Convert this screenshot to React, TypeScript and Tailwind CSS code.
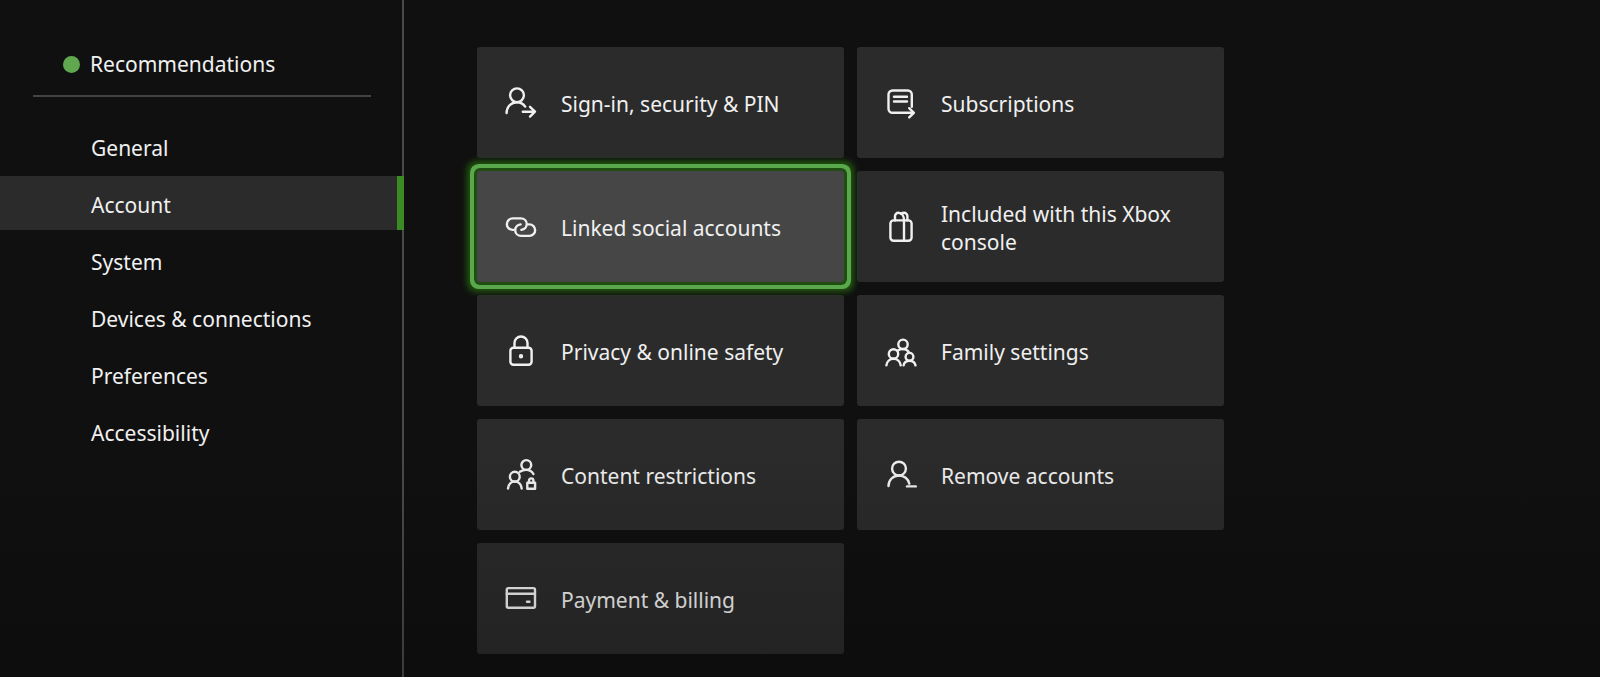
import type { ReactNode } from "react";
import clsx from "clsx";

const navItems = [
  "General",
  "Account",
  "System",
  "Devices & connections",
  "Preferences",
  "Accessibility",
];

const icons: Record<string, ReactNode> = {
  signIn: (
    <>
      <circle cx="12" cy="8.3" r="6.9" />
      <path d="M1.6 26c0-6.2 4.6-10.8 10.4-10.8 3.4 0 6.3 1.6 8.2 4.4" />
      <path d="M17.8 24.7h12M25 19.8l5 4.9-5 4.9" />
    </>
  ),
  subscriptions: (
    <>
      <path d="M26.8 19.8V7.5a4 4 0 0 0-4-4H7.5a4 4 0 0 0-4 4v14.3a4 4 0 0 0 4 4h21" />
      <path d="M24.2 21.2l4.6 4.6-4.6 4.6M9 9.7h13M9 14.5h13" />
    </>
  ),
  link: (
    <>
      <path d="M8.4 18.9H7.6a5.75 5.75 0 0 1 0-11.5h8.2c3.4 0 6 2.5 6 5.7 0 2.9-2.2 5.4-5.4 5.8" />
      <path d="M23.6 13.4h.8a5.75 5.75 0 0 1 0 11.5h-8.2c-3.4 0-6-2.5-6-5.7 0-2.9 2.2-5.4 5.4-5.8" />
    </>
  ),
  gift: (
    <>
      <rect x="5.4" y="9.4" width="21.2" height="20.4" rx="3.2" />
      <path d="M10 9.4V5.3a3.4 3.4 0 0 1 3.4-3.5c3.4 0 5.6 3 5.6 7.6v20.4" />
      <path d="M16 2.8c1-.7 2-1 3-1a3.4 3.4 0 0 1 3.4 3.5v4.1" />
    </>
  ),
  lock: (
    <>
      <rect x="5.4" y="12.8" width="21.2" height="17" rx="3" />
      <path d="M9.5 12.8V8a6.5 6.5 0 0 1 13 0v4.8" />
      <circle cx="16" cy="21.3" r="1" />
    </>
  ),
  family: (
    <>
      <circle cx="18" cy="9.3" r="4.7" />
      <circle cx="8.5" cy="18.9" r="4.7" />
      <circle cx="24.5" cy="21.8" r="3.9" />
      <path d="M1.4 30.4c.5-4 3.4-6.6 7.1-6.6s6.7 2.6 7.2 6.6" />
      <path d="M18.6 30.4c.5-2.9 2.9-4.5 5.9-4.5s5.4 1.6 6 4.5" />
      <path d="M12.8 15.6c1.4-1 3.2-1.5 5.2-1.5 2.4 0 4.3.9 5.6 2.6" />
    </>
  ),
  restrictions: (
    <>
      <circle cx="21.3" cy="6" r="4.9" />
      <circle cx="9.8" cy="17.7" r="4.9" />
      <path d="M3 29.5c.5-4.2 3.2-7 6.8-7s6.4 2.8 6.9 7" />
      <path d="M14.8 12.8c1.8-1.2 4-1.9 6.3-1.9 3.4 0 6 1.5 7.3 4.2" />
      <path d="M22.3 23.8h7.8v6h-7.8zM24 23.8v-2.2a2.2 2.2 0 0 1 4.4 0v2.2" />
    </>
  ),
  remove: (
    <>
      <circle cx="14" cy="9.6" r="6.9" />
      <path d="M3.5 27c0-6 4.6-10.5 10.5-10.5 5.1 0 9.3 3.4 10.3 8.2" />
      <path d="M22 27.4h8.8" />
    </>
  ),
  payment: (
    <>
      <rect x="1.8" y="5.1" width="28.2" height="19.6" rx="1.5" />
      <path d="M1.8 10.7H30M22 18.7h2.5" />
    </>
  ),
};

const tiles = [
  { label: "Sign-in, security & PIN", icon: "signIn" },
  { label: "Subscriptions", icon: "subscriptions" },
  { label: "Linked social accounts", icon: "link", focused: true },
  { label: "Included with this Xbox console", icon: "gift" },
  { label: "Privacy & online safety", icon: "lock" },
  { label: "Family settings", icon: "family" },
  { label: "Content restrictions", icon: "restrictions" },
  { label: "Remove accounts", icon: "remove" },
  { label: "Payment & billing", icon: "payment" },
];

function Tile({ label, icon, focused }: { label: string; icon: string; focused?: boolean }) {
  return (
    <button
      type="button"
      className={clsx(
        "flex h-[111px] items-center gap-6 rounded-[3px] pr-12 pl-7 text-left",
        focused
          ? "relative z-10 bg-[#464646] shadow-[0_0_0_3px_#1f4d12,0_0_0_7px_#5aa84c,0_0_6px_10px_#22590f]"
          : "bg-[#2b2b2b]"
      )}
    >
      <svg
        viewBox="0 0 32 31"
        className="h-[31px] w-8 shrink-0 overflow-visible"
        fill="none"
        stroke="currentColor"
        strokeWidth="2.4"
        strokeLinecap="round"
        strokeLinejoin="round"
        aria-hidden="true"
      >
        {icons[icon]}
      </svg>
      <span className="pt-0.5">{label}</span>
    </button>
  );
}

export default function App() {
  return (
    <div className="relative flex min-h-screen bg-[#101010] font-['Noto_Sans','Open_Sans',sans-serif] text-[21px] leading-7 text-[#f0f0f0]">
      <aside className="w-[404px] shrink-0 border-r-2 border-[#4a4a4a] pt-9">
        <button type="button" className="flex h-14 w-full items-center gap-2.5 pl-[63px]">
          <span className="size-[17px] rounded-full bg-[#5fa84f]" />
          Recommendations
        </button>
        <hr className="mt-[3px] mr-[31px] ml-[33px] border-t-2 border-[#444444]" />

        <nav className="mt-[22px] flex flex-col gap-[3px]">
          {navItems.map((item) => (
            <a
              key={item}
              href="#"
              className={clsx(
                "flex h-[54px] items-center pt-1 pl-[91px]",
                item === "Account" && "-mr-0.5 border-r-[7px] border-[#3a8a25] bg-[#2b2b2b]"
              )}
            >
              {item}
            </a>
          ))}
        </nav>
      </aside>

      <main className="flex-1 pt-[47px] pb-[22px] pl-[73px]">
        <div className="grid max-w-[747px] grid-cols-2 gap-[13px]">
          {tiles.map((tile) => (
            <Tile key={tile.label} {...tile} />
          ))}
        </div>
      </main>

      {/* Bottom fade */}
      <div className="pointer-events-none absolute inset-x-0 bottom-0 z-20 h-60 bg-linear-to-b from-black/0 to-black/20" />
    </div>
  );
}
